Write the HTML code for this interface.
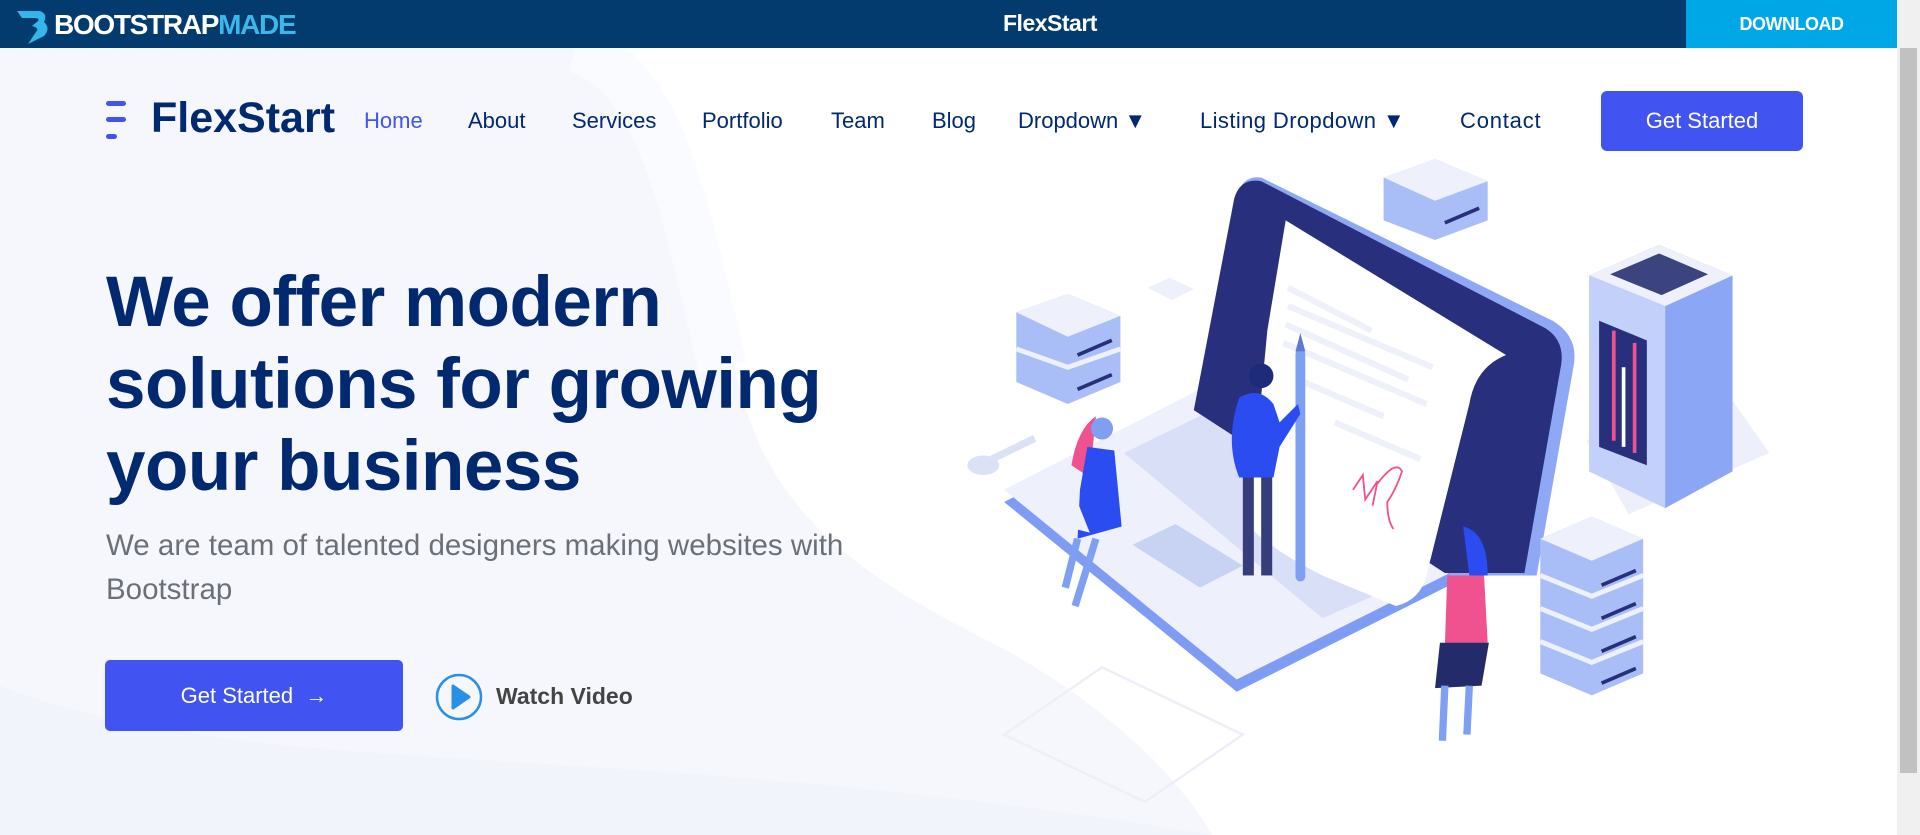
<!DOCTYPE html>
<html><head><meta charset="utf-8">
<style>
*{margin:0;padding:0;box-sizing:border-box}
body{width:1920px;height:835px;overflow:hidden;background:#fff;font-family:"Liberation Sans",sans-serif;position:relative}
.abs{position:absolute}
#bar{left:0;top:0;width:1897px;height:48px;background:#033b6e}
#dl{left:1686px;top:0;width:211px;height:48px;background:#00a7e7;color:#fff;font-weight:bold;font-size:18px;line-height:48px;text-align:center;letter-spacing:-0.5px}
#sb{left:1897px;top:0;width:23px;height:835px;background:#f0f0f0}
#sbt{left:1900px;top:48px;width:17px;height:725px;background:#c1c1c1}
.nav{top:106px;font-size:22px;color:#012970;line-height:30px}
h1{position:absolute;left:106px;top:262px;font-size:71px;line-height:82px;color:#012970;font-weight:bold;letter-spacing:-0.5px}
</style></head><body>
<svg class="abs" style="left:0;top:0" width="1920" height="835" viewBox="0 0 1568 682">
<path d="M0 39 L470 39 C560 70 580 200 600 300 C625 420 700 470 820 530 C900 575 960 630 990 682 L0 682 Z" fill="#f5f7fd"/>
<path d="M470 39 C540 60 560 170 590 300" fill="none" stroke="#fafbfe" stroke-width="40"/>
<path d="M0 560 C200 640 500 600 990 682 L0 682Z" fill="#f2f4fb"/>
<path d="M820 600 L900 545 L1015 600 L935 655 Z" fill="none" stroke="#eceff8" stroke-width="2"/>
<path d="M1296 360 L1410 320 L1445 370 L1330 420 Z" fill="#edf0fa"/>
<path d="M820 410 L1005 315 L1200 470 L1010 565 Z" fill="#7f9cf5"/>
<path d="M820 400 L1005 305 L1200 460 L1010 555 Z" fill="#eef0fb"/>
<path d="M918 370 L1000 330 L1160 470 L1080 505 Z" fill="#d3dbf5" opacity=".8"/>
<path d="M925 445 L960 428 L1015 462 L980 480 Z" fill="#c8d2f2"/>
<path d="M1030 145 L1268 262 Q1290 275 1285 300 L1255 470 L1185 470 L975 335 L1010 160 Q1015 143 1030 145Z" fill="#8ea8f5"/>
<path d="M1030 148 L1262 268 Q1278 278 1275 298 L1245 468 L1180 468 L975 335 L1008 162 Q1013 145 1030 148Z" fill="#282f7d"/>
<path d="M1050 180 L1230 290 Q1205 300 1200 330 L1165 470 Q1160 490 1140 495 L1080 470 Q1040 450 1020 430 L1035 270 Z" fill="#fff"/>
<g stroke="#eef0fa" stroke-width="5">
<line x1="1052" y1="235" x2="1120" y2="270"/><line x1="1052" y1="250" x2="1170" y2="300"/><line x1="1050" y1="265" x2="1150" y2="310"/><line x1="1048" y1="280" x2="1165" y2="330"/><line x1="1060" y1="310" x2="1130" y2="340"/><line x1="1090" y1="345" x2="1160" y2="375"/>
</g>
<path d="M1105 400 l8 -12 l2 20 l10 -15 l-4 20 M1125 395 q15 -20 20 -10 q-5 15 -12 25 q0 15 5 22" fill="none" stroke="#f0518f" stroke-width="1.5"/>
<rect x="1058" y="285" width="8" height="190" rx="4" fill="#7fa0f2"/>
<path d="M1058 287 L1062 272 L1066 287Z" fill="#5b7ad0"/>
<circle cx="1030" cy="307" r="10" fill="#1e2a7a"/>
<path d="M1012 325 Q1028 315 1040 330 L1045 345 L1060 330 L1062 338 L1045 365 L1040 390 L1012 390 Q1000 360 1012 325Z" fill="#2b4cf0"/>
<rect x="1015" y="390" width="9" height="80" fill="#353d7a"/><rect x="1030" y="390" width="9" height="80" fill="#353d7a"/>
<path d="M895 340 Q880 350 875 380 L890 390 Z" fill="#f0518f"/>
<circle cx="900" cy="350" r="9" fill="#7fa0f2"/>
<path d="M888 365 L910 368 L916 430 L880 440 L882 400Z" fill="#2b4cf0"/>
<path d="M880 440 L870 480 M895 440 L878 495" stroke="#7fa0f2" stroke-width="6"/>
<path d="M862 405 L880 410 L890 435 L870 430Z" fill="#eef0fb"/>
<ellipse cx="803" cy="380" rx="13" ry="8" fill="#dbe2f6"/><path d="M810 375 L845 358" stroke="#dbe2f6" stroke-width="6"/>
<path d="M1195 430 Q1215 435 1215 470 L1200 470Z" fill="#2b4cf0"/>
<path d="M1182 470 L1212 470 L1215 525 L1180 528 Z" fill="#f0518f"/>
<path d="M1176 525 L1216 525 L1210 560 L1172 562Z" fill="#232b6b"/>
<path d="M1180 560 L1178 605 M1200 560 L1198 600" stroke="#7fa0f2" stroke-width="6"/>
<g>
<path d="M830 255 L872 240 L915 258 L915 312 L872 330 L830 312Z" fill="#a9bdf6"/>
<path d="M830 255 L872 240 L915 258 L872 275Z" fill="#eef0fb"/>
<path d="M830 285 L872 300 L915 285" fill="none" stroke="#eef0fb" stroke-width="4"/>
<path d="M880 290 L908 278 M880 318 L908 306" stroke="#28307a" stroke-width="3"/>
</g>
<g>
<path d="M1130 145 L1172 130 L1215 148 L1215 180 L1172 196 L1130 180Z" fill="#a9bdf6"/>
<path d="M1130 145 L1172 130 L1215 148 L1172 164Z" fill="#eef0fb"/>
<path d="M1180 182 L1208 170" stroke="#28307a" stroke-width="3"/>
</g>
<path d="M937 235 L955 227 L975 236 L957 245Z" fill="#eef0fb"/>
<g>
<path d="M1258 440 L1300 422 L1342 440 L1342 550 L1300 568 L1258 550Z" fill="#a9bdf6"/>
<path d="M1258 440 L1300 422 L1342 440 L1300 458Z" fill="#eef0fb"/>
<path d="M1258 470 L1300 487 L1342 470 M1258 497 L1300 514 L1342 497 M1258 524 L1300 541 L1342 524" fill="none" stroke="#eef0fb" stroke-width="4"/>
<path d="M1308 478 L1336 466 M1308 505 L1336 493 M1308 532 L1336 520 M1308 558 L1336 546" stroke="#28307a" stroke-width="3"/>
</g>
<path d="M1298 225 L1355 200 L1415 225 L1415 385 L1360 415 L1298 385Z" fill="#8aa6f5"/>
<path d="M1298 225 L1355 200 L1415 225 L1360 250Z" fill="#eef0fb"/>
<path d="M1315 224 L1355 207 L1395 224 L1357 241Z" fill="#3c4480"/>
<path d="M1298 225 L1360 250 L1360 415 L1298 385Z" fill="#c3d1fa"/>
<path d="M1306 262 L1345 278 L1345 380 L1306 365Z" fill="#282f7d"/>
<path d="M1318 270 L1318 360 M1335 280 L1335 370" stroke="#f0518f" stroke-width="3"/>
<path d="M1326 300 L1326 365" stroke="#fff" stroke-width="3"/>
</svg>
<div id="bar" class="abs"></div>
<svg class="abs" style="left:14px;top:6px" width="38" height="38" viewBox="0 0 38 38"><path d="M3 5 L26 5 Q34 8 30 16 Q37 22 30 30 L14 38 L22 26 Q26 22 18 20 L24 15 Q26 12 20 12 L8 12Z" fill="#33b6ec"/></svg>
<div class="abs" style="left:54px;top:9px;font-size:28px;font-weight:bold;color:#fff;letter-spacing:-1.3px">BOOTSTRAP<span style="color:#3ab8ea">MADE</span></div>
<div class="abs" style="left:1003px;top:10px;font-size:23px;font-weight:bold;color:#fff;letter-spacing:-0.5px">FlexStart</div>
<div id="dl" class="abs">DOWNLOAD</div>
<div id="sb" class="abs"></div><div id="sbt" class="abs"></div>
<div class="abs" style="left:106px;top:101px;width:20px;height:5px;border-radius:3px;background:#4154f1"></div>
<div class="abs" style="left:106px;top:117px;width:20px;height:5px;border-radius:3px;background:#4154f1"></div>
<div class="abs" style="left:106px;top:134px;width:11px;height:5px;border-radius:3px;background:#4154f1"></div>
<div class="abs" style="left:151px;top:94px;font-size:43px;font-weight:bold;color:#012970">FlexStart</div>
<div class="abs nav" style="left:364px;color:#4154f1">Home</div>
<div class="abs nav" style="left:468px">About</div>
<div class="abs nav" style="left:572px">Services</div>
<div class="abs nav" style="left:702px">Portfolio</div>
<div class="abs nav" style="left:831px">Team</div>
<div class="abs nav" style="left:932px">Blog</div>
<div class="abs nav" style="left:1018px">Dropdown ▼</div>
<div class="abs nav" style="left:1200px;letter-spacing:0.4px">Listing Dropdown ▼</div>
<div class="abs nav" style="left:1460px;letter-spacing:0.8px">Contact</div>
<div class="abs" style="left:1601px;top:91px;width:202px;height:60px;border-radius:6px;background:#4154f1;color:#fff;font-size:22px;line-height:60px;text-align:center">Get Started</div>
<h1>We offer modern<br>solutions for growing<br>your business</h1>
<div class="abs" style="left:106px;top:524px;font-size:29.5px;line-height:44px;color:#6b7078">We are team of talented designers making websites with<br>Bootstrap</div>
<div class="abs" style="left:105px;top:660px;width:298px;height:71px;border-radius:5px;background:#4154f1;color:#fff;font-size:22px;line-height:71px;text-align:center">Get Started &nbsp;→</div>
<svg class="abs" style="left:434px;top:672px" width="50" height="50" viewBox="0 0 50 50"><circle cx="25" cy="25" r="22" fill="none" stroke="#2a8fe8" stroke-width="2.5"/><path d="M19 14 L35 25 L19 36Z" fill="#2a8fe8" stroke="#2a8fe8" stroke-width="3" stroke-linejoin="round"/></svg>
<div class="abs" style="left:496px;top:683px;font-size:23px;font-weight:bold;color:#444">Watch Video</div>
</body></html>
